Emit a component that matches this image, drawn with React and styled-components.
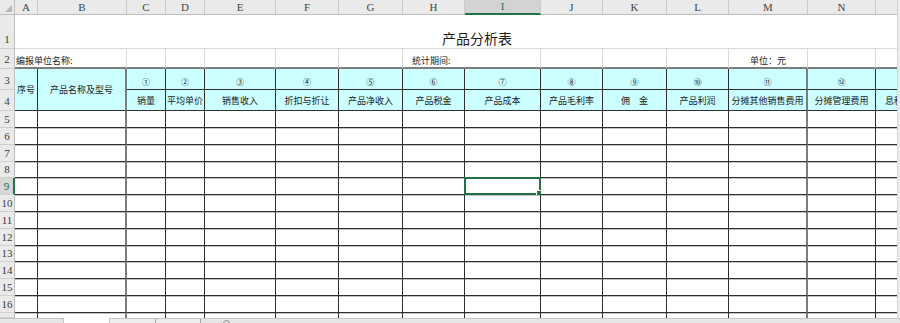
import React from "react";
import styled, { createGlobalStyle } from "styled-components";

const GlobalStyle = createGlobalStyle`
  html, body {
    margin: 0;
    padding: 0;
    background: #ffffff;
  }
  body {
    font-family: "Noto Sans CJK SC", "Noto Sans", sans-serif;
  }
`;

// last column runs past the window edge, so its letter is not shown
const COLS = [
  { id: "A", w: 23 },
  { id: "B", w: 89 },
  { id: "C", w: 39 },
  { id: "D", w: 39 },
  { id: "E", w: 71 },
  { id: "F", w: 63 },
  { id: "G", w: 64 },
  { id: "H", w: 62 },
  { id: "I", w: 76 },
  { id: "J", w: 62 },
  { id: "K", w: 64 },
  { id: "L", w: 62 },
  { id: "M", w: 79 },
  { id: "N", w: 68 },
  { id: "O", w: 64, hidden: true },
];

const HEADS = [
  { no: "①", label: "销量" },
  { no: "②", label: "平均单价" },
  { no: "③", label: "销售收入" },
  { no: "④", label: "折扣与折让" },
  { no: "⑤", label: "产品净收入" },
  { no: "⑥", label: "产品税金" },
  { no: "⑦", label: "产品成本" },
  { no: "⑧", label: "产品毛利率" },
  { no: "⑨", label: "佣　金" },
  { no: "⑩", label: "产品利润" },
  { no: "⑪", label: "分摊其他销售费用" },
  { no: "⑫", label: "分摊管理费用" },
  { no: "", label: "息税前利润" },
];

const DATA_ROWS = [17, 17, 17, 16, 17, 17, 17, 17, 16, 17, 17, 17];
const ACTIVE_COL = "I";
const ACTIVE_ROW = 9;

// columns whose right edge is the heavier grey rule
const HEAVY = ["B", "M"];

const line = {
  none: "none",
  grid: "1px solid #dadada",
  dark: "1px solid #2e2e2e",
  heavy: "2px solid #7d7d7d",
};

const Window = styled.div`
  width: 900px;
  height: 323px;
  display: flex;
  flex-direction: column;
  overflow: hidden;
  background: #ffffff;
`;

const SheetArea = styled.div`
  display: flex;
  height: 318px;
`;

const Viewport = styled.div`
  width: 897px;
  overflow: hidden;
`;

const Grid = styled.div`
  display: grid;
  width: max-content;
  grid-template-columns: 15px ${COLS.map((c) => `${c.w}px`).join(" ")};
  grid-template-rows: 15px 34px 20px 21px 21px ${DATA_ROWS.map((h) => `${h}px`).join(" ")} 5px;
`;

const Corner = styled.div`
  box-sizing: border-box;
  display: flex;
  align-items: flex-end;
  justify-content: flex-end;
  background: #eaeaea;
  border-right: 1px solid #bdbdbd;
  border-bottom: 1px solid #bdbdbd;
`;

const Triangle = styled.span`
  width: 0;
  height: 0;
  margin: 0 2px 2px 0;
  border-left: 7px solid transparent;
  border-bottom: 7px solid #b6b6b6;
`;

const ColHead = styled.div`
  box-sizing: border-box;
  display: flex;
  align-items: center;
  justify-content: center;
  background: ${(p) => (p.$active ? "#d3d3d3" : "#eaeaea")};
  border-right: 1px solid #c9c9c9;
  border-bottom: ${(p) => (p.$active ? "2px solid #217346" : "1px solid #bdbdbd")};
  color: ${(p) => (p.$active ? "#217346" : "#444444")};
  font-family: "Liberation Serif", "DejaVu Serif", serif;
  font-size: 11px;
  line-height: 1;
`;

const RowHead = styled.div`
  box-sizing: border-box;
  display: flex;
  align-items: ${(p) => (p.$bottom ? "flex-end" : "center")};
  justify-content: center;
  padding-bottom: ${(p) => (p.$bottom ? "3px" : "0")};
  background: ${(p) => (p.$active ? "#d6d6d6" : "#eaeaea")};
  border-right: ${(p) => (p.$active ? "2px solid #217346" : "1px solid #bdbdbd")};
  border-bottom: 1px solid #cfcfcf;
  color: ${(p) => (p.$active ? "#217346" : "#3a3a3a")};
  font-family: "Liberation Serif", "DejaVu Serif", serif;
  font-size: 11px;
  line-height: 1;
  overflow: hidden;
`;

const Cell = styled.div`
  position: relative;
  box-sizing: border-box;
  display: flex;
  align-items: ${(p) => (p.$valign === "bottom" ? "flex-end" : "center")};
  justify-content: ${(p) => p.$halign || "center"};
  padding: ${(p) => p.$pad || "0"};
  grid-column: ${(p) => (p.$span ? `span ${p.$span}` : "auto")};
  grid-row: ${(p) => (p.$rows ? `span ${p.$rows}` : "auto")};
  background: ${(p) => (p.$fill ? "#ccffff" : "#ffffff")};
  border-right: ${(p) => line[p.$right || "grid"]};
  border-bottom: ${(p) => line[p.$bottom || "grid"]};
  box-shadow: ${(p) => (p.$shade ? "inset 0 1px 0 #c2c2c2" : "none")};
  color: #1c1c1c;
  font-size: ${(p) => p.$size || 9}px;
  line-height: 1;
  white-space: nowrap;
`;

const Selection = styled.div`
  position: absolute;
  top: -1px;
  left: -1px;
  right: -1px;
  bottom: -1px;
  border: 2px solid #217346;
  pointer-events: none;
`;

const Handle = styled.span`
  position: absolute;
  right: -4px;
  bottom: -4px;
  width: 5px;
  height: 5px;
  background: #217346;
  border: 1px solid #ffffff;
`;

const VScroll = styled.div`
  flex: 1;
  background: #ececec;
  border-left: 1px solid #d6d6d6;
`;

const TabBar = styled.div`
  box-sizing: border-box;
  display: flex;
  height: 5px;
  background: #e6e6e6;
  border-top: 1px solid #c6c6c6;
`;

const TabNav = styled.div`
  width: 63px;
`;

const SheetTab = styled.div`
  box-sizing: border-box;
  width: ${(p) => p.$w}px;
  margin-top: ${(p) => (p.$active ? "-1px" : "0")};
  background: ${(p) => (p.$active ? "#ffffff" : "#ededed")};
  border-left: ${(p) => (p.$active ? "1px solid #c6c6c6" : "none")};
  border-right: 1px solid ${(p) => (p.$active ? "#c6c6c6" : "#a8a8a8")};
`;

const AddTab = styled.div`
  width: 7px;
  height: 7px;
  margin: 1px 0 0 22px;
  box-sizing: border-box;
  border: 1px solid #8a8a8a;
  border-radius: 50%;
`;

const rightOf = (id) => (HEAVY.includes(id) ? "heavy" : "dark");

const App = () => {
  return (
    <>
      <GlobalStyle />
      <Window>
        <SheetArea>
          <Viewport>
            <Grid>
              {/* column letters */}
              <Corner>
                <Triangle />
              </Corner>
              {COLS.map((c) => (
                <ColHead key={c.id} $active={c.id === ACTIVE_COL}>
                  {c.hidden ? "" : c.id}
                </ColHead>
              ))}

              {/* row 1: title */}
              <RowHead $bottom>1</RowHead>
              <Cell $span={COLS.length} $valign="bottom" $pad="0 0 3px" $size={14}>
                产品分析表
              </Cell>

              {/* row 2 */}
              <RowHead $bottom>2</RowHead>
              <Cell $span={2} $halign="flex-start" $valign="bottom" $pad="0 0 2px 1px" $bottom="heavy">
                编报单位名称:
              </Cell>
              {COLS.slice(2).map((c) => {
                if (c.id === "H")
                  return (
                    <Cell key={c.id} $span={2} $halign="flex-start" $valign="bottom" $pad="0 0 2px 9px" $bottom="heavy">
                      统计期间:
                    </Cell>
                  );
                if (c.id === "I") return null;
                return (
                  <Cell key={c.id} $valign="bottom" $pad="0 0 2px" $bottom="heavy">
                    {c.id === "M" ? "单位：元" : ""}
                  </Cell>
                );
              })}

              {/* rows 3-4: column titles */}
              <RowHead $bottom>3</RowHead>
              <Cell $rows={2} $fill $right="dark" $bottom="dark">
                序号
              </Cell>
              <Cell $rows={2} $fill $right="heavy" $bottom="dark">
                产品名称及型号
              </Cell>
              {HEADS.map((h, i) => (
                <Cell key={`no-${i}`} $fill $valign="bottom" $pad="0 0 3px" $size={8} $right={rightOf(COLS[i + 2].id)} $bottom="dark">
                  {h.no}
                </Cell>
              ))}
              <RowHead $bottom>4</RowHead>
              {HEADS.map((h, i) => (
                <Cell key={h.label} $fill $right={rightOf(COLS[i + 2].id)} $bottom="dark">
                  {h.label}
                </Cell>
              ))}

              {/* empty data rows 5-16 */}
              {DATA_ROWS.map((_, r) => {
                const rowNo = r + 5;
                return (
                  <React.Fragment key={rowNo}>
                    <RowHead $active={rowNo === ACTIVE_ROW}>{rowNo}</RowHead>
                    {COLS.map((c) => (
                      <Cell key={c.id} $shade={r > 0} $right={rightOf(c.id)} $bottom="dark">
                        {rowNo === ACTIVE_ROW && c.id === ACTIVE_COL && (
                          <Selection>
                            <Handle />
                          </Selection>
                        )}
                      </Cell>
                    ))}
                  </React.Fragment>
                );
              })}

              {/* row 17, cut by the sheet tabs */}
              <RowHead />
              {COLS.map((c) => (
                <Cell key={c.id} $shade $right={rightOf(c.id)} $bottom="none" />
              ))}
            </Grid>
          </Viewport>
          <VScroll />
        </SheetArea>
        <TabBar>
          <TabNav />
          <SheetTab $active $w={47} />
          <SheetTab $w={46} />
          <SheetTab $w={45} />
          <AddTab />
        </TabBar>
      </Window>
    </>
  );
};

export default App;
